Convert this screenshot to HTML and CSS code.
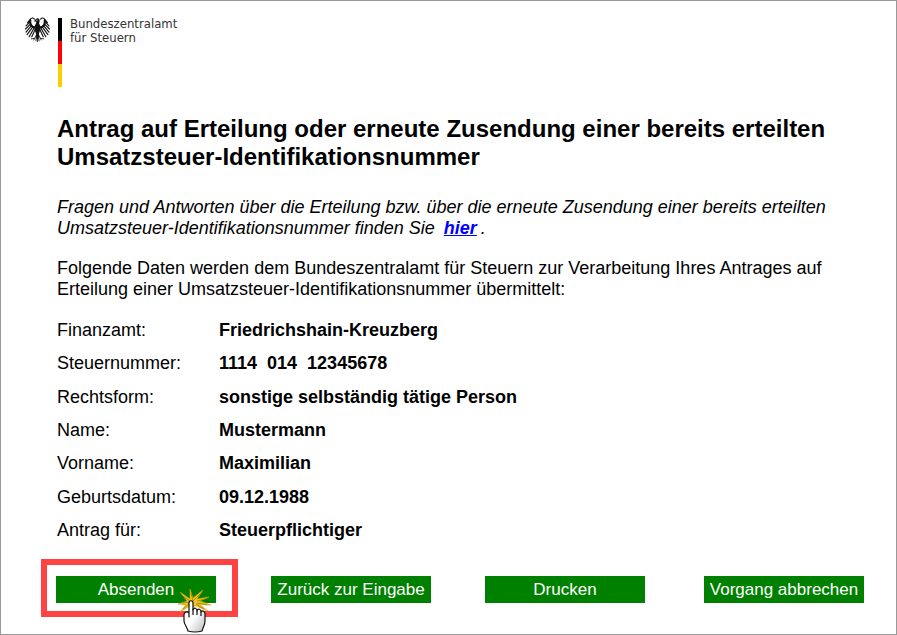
FILE: index.html
```html
<!DOCTYPE html>
<html lang="de">
<head>
<meta charset="utf-8">
<meta name="viewport" content="width=device-width, initial-scale=1">
<title>Bundeszentralamt für Steuern</title>
<link rel="stylesheet" href="styles.css">
</head>
<body>
<div class="page">
  <header class="brand">
    <svg class="eagle" viewBox="0 0 48 48" aria-hidden="true">
      <g fill="none" stroke="#111" stroke-linecap="round">
        <path stroke-width="4" d="M20 20C14 20 9 16 10 6M28 20C34 20 39 16 38 6"/>
        <g stroke-width="2.2">
          <path d="M10 5C12 1 16 1 18 4M9 6L5 11M9 10L2 17M10 14L1 23M12 17L2 29M15 19L4 34M18 20L8 38M20 23L13 38"/>
          <path d="M38 5C36 1 32 1 30 4M39 6L43 11M39 10L46 17M38 14L47 23M36 17L46 29M33 19L44 34M30 20L40 38M28 23L35 38"/>
        </g>
        <path stroke-width="1.6" d="M22 34L17 44M26 34L31 44M22 36L21 46M26 36L27 46M24 34V47M12 42L18 41M36 42L30 41"/>
      </g>
      <path fill="#111" d="M17 8L21 4C24 1 29 3 28 8L27 13C31 17 30 26 27 31L26 42H22L21 31C18 26 17 17 21 13L22 9Z"/>
      <circle cx="23" cy="6" r="1" fill="#fff"/>
    </svg>
    <span class="flag"></span>
    <span class="agency">Bundeszentralamt<br>für Steuern</span>
  </header>

  <main class="content">
    <h1>Antrag auf Erteilung oder erneute Zusendung einer bereits erteilten Umsatzsteuer-Identifikationsnummer</h1>
    <p class="hint">Fragen und Antworten über die Erteilung bzw. über die erneute Zusendung einer bereits erteilten Umsatzsteuer-Identifikationsnummer finden Sie <a href="#">hier</a>.</p>
    <p>Folgende Daten werden dem Bundeszentralamt für Steuern zur Verarbeitung Ihres Antrages auf Erteilung einer Umsatzsteuer-Identifikationsnummer übermittelt:</p>
    <table class="data">
      <tr><th scope="row">Finanzamt:</th><td>Friedrichshain-Kreuzberg</td></tr>
      <tr><th scope="row">Steuernummer:</th><td>1114&nbsp; 014&nbsp; 12345678</td></tr>
      <tr><th scope="row">Rechtsform:</th><td>sonstige selbständig tätige Person</td></tr>
      <tr><th scope="row">Name:</th><td>Mustermann</td></tr>
      <tr><th scope="row">Vorname:</th><td>Maximilian</td></tr>
      <tr><th scope="row">Geburtsdatum:</th><td>09.12.1988</td></tr>
      <tr><th scope="row">Antrag für:</th><td>Steuerpflichtiger</td></tr>
    </table>
  </main>

  <div class="actions">
    <div class="marked">
      <button type="button">Absenden</button>
      <svg class="pointer" viewBox="0 0 36 46" aria-hidden="true">
        <defs>
          <linearGradient id="hand" x1="0" y1="0" x2="1" y2="1">
            <stop offset="0.5" stop-color="#fff"/>
            <stop offset="1" stop-color="#bbb"/>
          </linearGradient>
        </defs>
        <path fill="#f6c21c" stroke="#d79a08" stroke-width="0.6" d="M12 0L15 9L25 1L19 10L31 8L22 12L33 16L21 15L30 22L18 17L10 18L2 23L8 16L0 15L9 12L2 3L12 10Z"/>
        <path fill="none" stroke="#7d8200" stroke-width="0.7" d="M13 4L15 12L22 5M5 7L13 13L4 14M19 12L27 10M19 14L29 16M18 15L26 20M11 15L5 20"/>
        <path fill="url(#hand)" stroke="#111" stroke-width="1.2" stroke-linejoin="round" d="M11 28V14C11 11 15 11 15 14V21C16 18 19 19 19 22C20 19 23 20 23 23C24 21 27 22 27 25V32C27 36 25 38 24 42Q17 44 10 42C9 38 6 35 6 32V26C6 23 9 22 11 24Z"/>
        <path fill="none" stroke="#111" stroke-width="1.2" d="M15 20V26M19 22V26M23 23V27"/>
      </svg>
    </div>
    <button type="button">Zurück zur Eingabe</button>
    <button type="button">Drucken</button>
    <button type="button">Vorgang abbrechen</button>
  </div>
</div>
</body>
</html>
```
FILE: styles.css
```css
* {
  box-sizing: border-box;
}

body {
  margin: 0;
  background: #fff;
  color: #000;
  font: 18px/21px "Liberation Sans", Arial, sans-serif;
}

.page {
  min-height: 100vh;
  padding: 16px 32px 16px 24px;
  border: 1px solid #999;
}

.brand {
  display: flex;
  align-items: flex-start;
}

.eagle {
  width: 25px;
  height: 25px;
}

.flag {
  width: 4px;
  height: 69px;
  margin: 1px 8px 0;
  background: linear-gradient(#000 0 33%, #f00 33% 67%, #fc0 67%);
}

.agency {
  color: #333;
  font: 13px/14px "DejaVu Sans Condensed", "DejaVu Sans", sans-serif;
}

.content {
  padding: 28px 0 0 32px;
}

h1 {
  margin: 0 0 26px;
  font-size: 24px;
  line-height: 28px;
}

p {
  margin: 0 0 19px;
}

.hint {
  font-style: italic;
}

.hint a {
  margin: 0 4px;
  color: #00f;
  font-weight: bold;
}

.data {
  height: 233px;
  margin-top: 20px;
  border-collapse: collapse;
}

.data th,
.data td {
  padding: 0 0 12px;
  text-align: left;
}

.data th {
  width: 162px;
  font-weight: normal;
}

.data td {
  font-weight: bold;
}

.actions {
  display: grid;
  grid-template-columns: 215fr 214fr 219fr 160px;
  align-items: baseline;
  margin: 6px 0 0 31px;
}

.marked {
  position: relative;
  justify-self: start;
  margin: 0 0 0 -15px;
  padding: 11px 16px 8px 9px;
  border: 6px solid #ff4242;
}

button {
  display: block;
  width: 160px;
  height: 27px;
  padding: 0;
  border: 0;
  background: #008000;
  color: #fff;
  font: 17px/27px "Liberation Sans", Arial, sans-serif;
  white-space: nowrap;
}

.pointer {
  position: absolute;
  top: 24px;
  right: 18px;
  width: 36px;
  height: 46px;
  pointer-events: none;
}
```
